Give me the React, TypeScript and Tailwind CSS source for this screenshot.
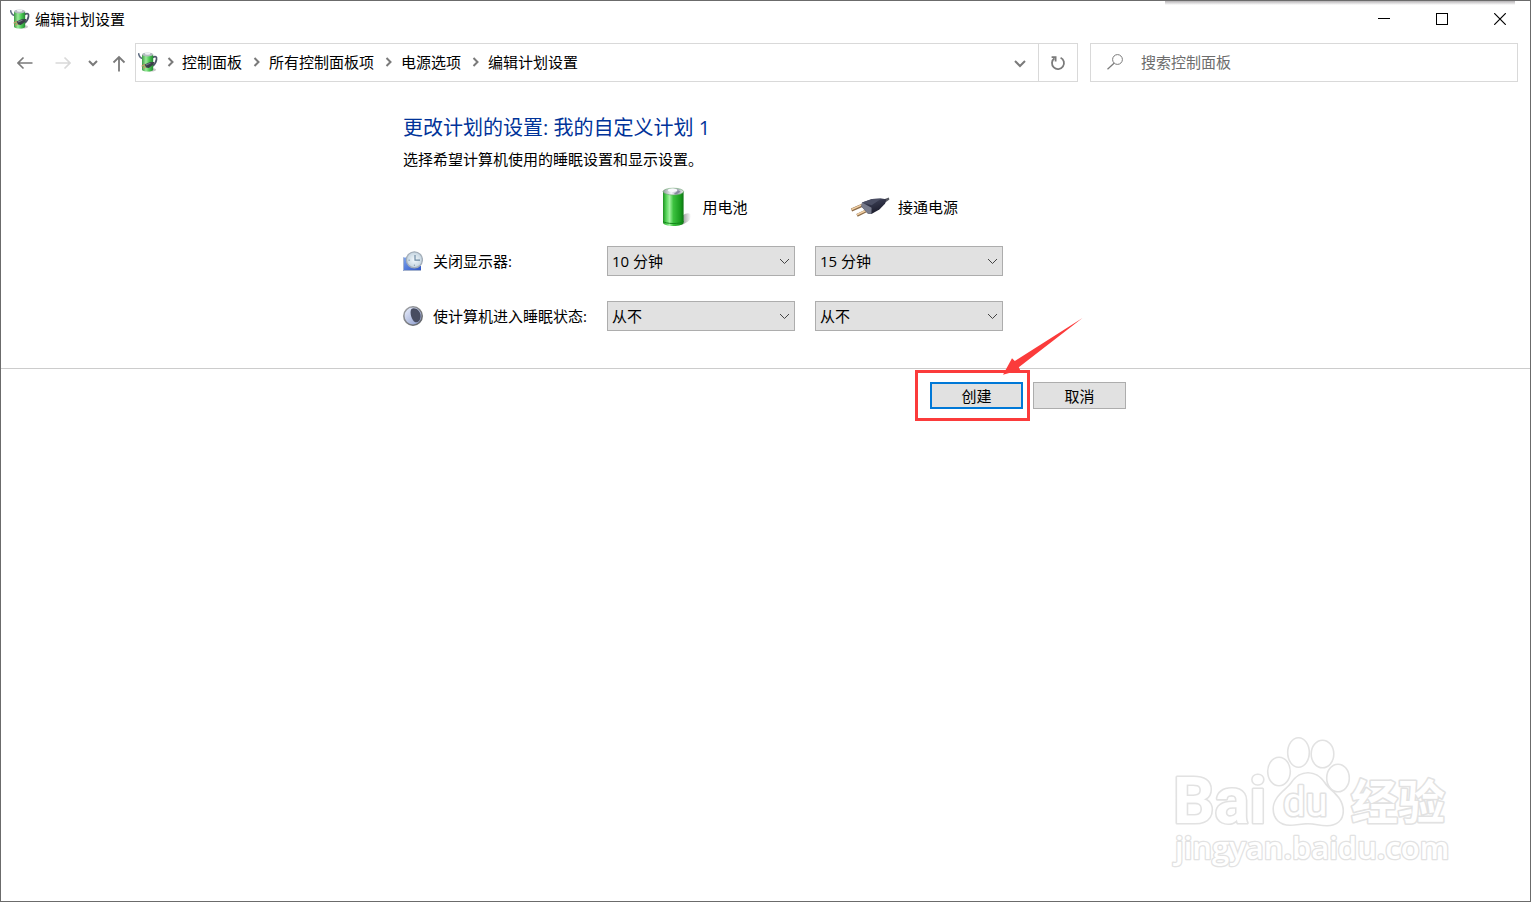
import React, { useState } from 'react';

const BREADCRUMBS = ['控制面板', '所有控制面板项', '电源选项', '编辑计划设置'];

const TIMEOUTS = ['1 分钟', '5 分钟', '10 分钟', '15 分钟', '30 分钟', '从不'];

/** Power options icon: green battery with a cable and plug. */
function PowerPlanIcon() {
  return (
    <svg className="h-5 w-5 shrink-0" viewBox="0 0 20 20" fill="none" aria-hidden="true">
      <defs>
        <linearGradient id="planBody" x1="0" x2="1">
          <stop offset="0" stopColor="#3c9a45" />
          <stop offset="0.35" stopColor="#9bea9a" />
          <stop offset="0.65" stopColor="#4ccb55" />
          <stop offset="1" stopColor="#278a35" />
        </linearGradient>
      </defs>
      <path d="M0.5 1.2C1 4.5 2.2 6 4.6 6.6" stroke="#5d6b80" strokeWidth="1.5" />
      <path d="M14.5 5.5C17.5 3.6 19 4.8 18.5 7.5C18 10.6 17.4 12 14.5 14" stroke="#4d5468" strokeWidth="1.7" />
      <ellipse cx="12.5" cy="17.8" rx="5.5" ry="1.8" fill="#c9c9c9" />
      <path d="M4 2.5V17.4C4 18.8 6.4 19.6 9.6 19.6C12.8 19.6 15.2 18.8 15.2 17.4V2.5Z" fill="url(#planBody)" />
      <ellipse cx="9.6" cy="2.4" rx="5.6" ry="2" fill="#b3bcc0" />
      <ellipse cx="9.6" cy="1.7" rx="2.8" ry="1.1" fill="#eef1f3" />
      <path d="M3.6 14.2L7 12.4M5.2 16.2L8.4 14.4" stroke="#c49a63" strokeWidth="1.3" />
      <path d="M6.6 12.4L11.6 10.2L16.4 10L15.4 12.6L10.8 16L8.2 15.6Z" fill="#3b3e48" />
      <path d="M7.4 12.6L11.8 10.8L13 11.2L8.6 13.6Z" fill="#747986" />
    </svg>
  );
}

function BatteryIcon() {
  return (
    <svg className="h-10 w-10 shrink-0" viewBox="0 0 40 40" fill="none" aria-hidden="true">
      <defs>
        <linearGradient id="cellBody" x1="0" x2="1">
          <stop offset="0" stopColor="#1f8f22" />
          <stop offset="0.14" stopColor="#4fd052" />
          <stop offset="0.32" stopColor="#a2f3a0" />
          <stop offset="0.5" stopColor="#3cc23f" />
          <stop offset="0.85" stopColor="#189a1d" />
          <stop offset="1" stopColor="#0d7413" />
        </linearGradient>
        <linearGradient id="cellCap" x1="0" x2="1">
          <stop offset="0" stopColor="#8f9a9a" />
          <stop offset="0.4" stopColor="#f4f5fa" />
          <stop offset="0.7" stopColor="#a7a9b8" />
          <stop offset="1" stopColor="#e5ebe6" />
        </linearGradient>
        <linearGradient id="cellShade" x1="0" x2="1">
          <stop offset="0" stopColor="#8a8a8a" />
          <stop offset="1" stopColor="#ffffff" />
        </linearGradient>
      </defs>
      <path d="M28 29C33 25 37 26 37 29C37 33 33 36 27 38Z" fill="url(#cellShade)" />
      <path d="M9 4.5V35.5C9 37.6 13.4 39 19.3 39C25.2 39 29.6 37.6 29.6 35.5V4.5Z" fill="url(#cellBody)" />
      <path d="M9 34.4C11 37 27 37.4 29.6 34.4" stroke="#13851a" />
      <ellipse cx="19.3" cy="4.6" rx="10.3" ry="3.4" fill="url(#cellCap)" stroke="#6aa56d" strokeWidth="0.6" />
      <ellipse cx="18.6" cy="3.2" rx="4.6" ry="1.7" fill="#f9f9fd" />
      <path d="M20 6.8L24.5 3.4L26.6 4.8L22 7.6Z" fill="#8888a0" />
    </svg>
  );
}

function PlugIcon() {
  return (
    <svg className="h-10 w-10 shrink-0" viewBox="0 0 40 40" fill="none" aria-hidden="true">
      <defs>
        <linearGradient id="plugBody" x1="0" y1="0" x2="0.5" y2="1">
          <stop offset="0" stopColor="#5d6176" />
          <stop offset="0.45" stopColor="#33364a" />
          <stop offset="1" stopColor="#1b1c2b" />
        </linearGradient>
      </defs>
      <path d="M1.5 23L13 18" stroke="#8b6a47" strokeWidth="3" />
      <path d="M1.5 22.5L13 17.4" stroke="#f0cfa4" strokeWidth="1.5" />
      <path d="M7 28.3L19 22.5" stroke="#8b6a47" strokeWidth="3" />
      <path d="M7 27.7L19 22" stroke="#f0cfa4" strokeWidth="1.5" />
      <path d="M33.5 12.6L38.8 10.4L39.4 12.6L35 15.8Z" fill="#595b63" />
      <path d="M12 15.6L22 12L31.5 11.4L36.4 12.2L35 16.8L29.4 22.6L21.4 27L17.8 26.6L11.4 19.6Z" fill="url(#plugBody)" />
      <path d="M12 15.6L21.6 20.8L21.4 27L17.8 26.6L11.4 19.6Z" fill="#777b8c" />
      <path d="M12 15.6L22 12L31.5 11.4L21.6 18.2Z" fill="#4a4e63" />
    </svg>
  );
}

function DisplayTimeoutIcon() {
  return (
    <svg className="h-5 w-5 shrink-0" viewBox="0 0 20 20" fill="none" aria-hidden="true">
      <defs>
        <linearGradient id="screenFill" x1="0" y1="0" x2="1" y2="1">
          <stop offset="0" stopColor="#7da4ee" />
          <stop offset="1" stopColor="#2c53c4" />
        </linearGradient>
        <radialGradient id="clockFace">
          <stop offset="0" stopColor="#f3f9fd" />
          <stop offset="1" stopColor="#c3d3df" />
        </radialGradient>
      </defs>
      <path d="M0 6.5H6V15H18V20H0Z" fill="url(#screenFill)" />
      <path d="M0.5 6.5V19.5H18" stroke="#a5b3cf" />
      <circle cx="11.4" cy="8.8" r="8" fill="url(#clockFace)" stroke="#a3adb8" strokeWidth="1.3" />
      <path d="M12 4V9.2H17" stroke="#6f8ba3" strokeWidth="1.2" />
      <path d="M5.4 9.2H7M11.4 13.6V15" stroke="#8ba0b3" />
    </svg>
  );
}

function SleepIcon() {
  return (
    <svg className="h-5 w-5 shrink-0" viewBox="0 0 20 20" fill="none" aria-hidden="true">
      <defs>
        <linearGradient id="moonRing" x1="0" y1="0" x2="1" y2="1">
          <stop offset="0" stopColor="#a2a4a8" />
          <stop offset="1" stopColor="#5c5f64" />
        </linearGradient>
        <linearGradient id="moonGlow" x1="0" y1="0" x2="1" y2="1">
          <stop offset="0" stopColor="#f0f4fe" />
          <stop offset="1" stopColor="#8394c9" />
        </linearGradient>
      </defs>
      <circle cx="10" cy="10" r="9.2" fill="url(#moonGlow)" stroke="url(#moonRing)" strokeWidth="1.6" />
      <path d="M8.4 3C12 0.8 17.8 4.6 17.6 10.4C17.4 14.4 14.8 16.8 12.4 16.2C8.6 15 6.2 6 8.4 3Z" fill="#474c60" />
    </svg>
  );
}

function Chevron({ className, d }: { className: string; d: string }) {
  return (
    <svg className={className} viewBox="0 0 12 12" fill="none" stroke="currentColor" aria-hidden="true">
      <path d={d} />
    </svg>
  );
}

function TitleBar() {
  return (
    <header className="flex h-9 items-center pl-[9px] pr-px">
      <PowerPlanIcon />
      <h1 className="ml-[5px] flex-1 text-[15px] leading-5">编辑计划设置</h1>
      <button type="button" aria-label="最小化" className="flex h-9 w-[58px] items-center justify-center">
        <svg className="h-3 w-3" viewBox="0 0 12 12" stroke="#000" shapeRendering="crispEdges">
          <path d="M0 5.5H12" />
        </svg>
      </button>
      <button type="button" aria-label="最大化" className="flex h-9 w-[58px] items-center justify-center">
        <svg className="h-3 w-3" viewBox="0 0 12 12" fill="none" stroke="#000" shapeRendering="crispEdges">
          <path d="M0.5 0.5H11.5V11.5H0.5Z" />
        </svg>
      </button>
      <button type="button" aria-label="关闭" className="flex h-9 w-[58px] items-center justify-center">
        <svg className="h-3 w-3" viewBox="0 0 12 12" stroke="#000" strokeWidth="1.2">
          <path d="M0.2 0.2L11.8 11.8M11.8 0.2L0.2 11.8" />
        </svg>
      </button>
    </header>
  );
}

function NavigationBar() {
  return (
    <div className="flex items-stretch pt-[6px] pr-3 pl-[6px] text-[#7a7a7a]">
      <button type="button" aria-label="后退" className="flex h-[39px] w-9 items-center justify-center">
        <svg className="h-4 w-4" viewBox="0 0 16 16" fill="none" stroke="currentColor" strokeWidth="1.6">
          <path d="M15.5 8H1M6.5 2.5L1 8L6.5 13.5" />
        </svg>
      </button>
      <button type="button" aria-label="前进" className="flex h-[39px] w-10 items-center justify-center text-[#d9d9d9]">
        <svg className="h-4 w-4" viewBox="0 0 16 16" fill="none" stroke="currentColor" strokeWidth="1.6">
          <path d="M0.5 8H15M9.5 2.5L15 8L9.5 13.5" />
        </svg>
      </button>
      <button type="button" aria-label="最近浏览的位置" className="flex h-[39px] w-5 items-center justify-center">
        <Chevron className="h-3 w-3 stroke-2" d="M2 4L6 8L10 4" />
      </button>
      <button type="button" aria-label="上移一级" className="flex h-[39px] w-8 items-center justify-center">
        <svg className="h-[18px] w-4" viewBox="0 0 16 18" fill="none" stroke="currentColor" strokeWidth="1.8">
          <path d="M8 17.5V3M2.5 8.5L8 3L13.5 8.5" />
        </svg>
      </button>

      <div className="flex flex-1 border border-[#d9d9d9]">
        <nav aria-label="地址" className="flex flex-1 items-center pb-[2px] pl-[2px]">
          <PowerPlanIcon />
          <ol className="flex items-center">
            {BREADCRUMBS.map((crumb, index) => (
              <li key={crumb} className="flex items-center">
                <span className={index === 0 ? 'flex w-6 justify-center' : 'flex w-[27px] justify-center'}>
                  <Chevron className="h-3 w-3 stroke-2" d="M4.5 2L8.5 6L4.5 10" />
                </span>
                <a href="#" className="text-[15px] leading-5 whitespace-nowrap text-black">
                  {crumb}
                </a>
              </li>
            ))}
          </ol>
        </nav>
        <button type="button" aria-label="以前的位置" className="flex w-9 items-center justify-center">
          <Chevron className="h-3 w-3 stroke-2" d="M1 4L6 9L11 4" />
        </button>
        <button
          type="button"
          aria-label="刷新"
          className="flex w-[39px] items-center justify-center border-l border-[#d9d9d9]"
        >
          <svg className="h-4 w-4" viewBox="0 0 16 16" fill="none" stroke="currentColor" strokeWidth="1.8">
            <path d="M10.6 2.7A6 6 0 1 1 4.4 3.3" />
            <path d="M1.6 2.2H5.6V6.4" />
          </svg>
        </button>
      </div>

      <label className="ml-3 flex w-[428px] items-center border border-[#d9d9d9] pb-[2px] pl-4">
        <svg className="h-4 w-4 shrink-0" viewBox="0 0 16 16" fill="none" stroke="currentColor">
          <circle cx="10.5" cy="5.5" r="4.9" />
          <path d="M7 9.2L0.5 15.2" strokeWidth="1.2" />
        </svg>
        <input
          type="search"
          aria-label="搜索控制面板"
          placeholder="搜索控制面板"
          className="ml-[18px] min-w-0 flex-1 bg-transparent text-[15px] leading-5 outline-none placeholder:text-[#6d6d6d]"
        />
      </label>
    </div>
  );
}

interface TimeoutSelectProps {
  id: string;
  label?: string;
  initial: string;
}

function TimeoutSelect({ id, label, initial }: TimeoutSelectProps) {
  const [value, setValue] = useState(initial);

  return (
    <div className="relative">
      <select
        id={id}
        aria-label={label}
        value={value}
        onChange={(e) => setValue(e.target.value)}
        className="block h-[30px] w-full appearance-none border border-[#adadad] bg-[#e1e1e1] pr-6 pl-1 text-[15px] leading-5"
      >
        {TIMEOUTS.map((option) => (
          <option key={option}>{option}</option>
        ))}
      </select>
      <Chevron
        className="pointer-events-none absolute top-[9px] right-1 h-3 w-3 text-[#444444]"
        d="M1 4L5.500 8.500L10 4"
      />
    </div>
  );
}

/** Red frame and arrow pointing at the create button. */
function CreateHighlight() {
  return (
    <>
      <span className="pointer-events-none absolute -top-3 -left-[15px] h-[51px] w-[115px] border-3 border-[#fb3b3b]" />
      <svg
        className="pointer-events-none absolute -top-[67px] left-[70px] h-[62px] w-[90px]"
        viewBox="0 0 90 62"
        aria-hidden="true"
      >
        <path d="M82.5 3L14.8 46L12 43.2L3 59.8L20.2 55L18.8 52.2Z" fill="#fb3b3b" />
      </svg>
    </>
  );
}

function Watermark() {
  return (
    <svg
      className="pointer-events-none absolute right-[70px] bottom-[26px] h-[150px] w-[300px]"
      viewBox="0 0 300 150"
      fill="#ffffff"
      stroke="#e2e2e2"
      strokeWidth="3.2"
      strokeLinejoin="round"
      paintOrder="stroke"
    >
      <text x="13" y="98" fontFamily="Roboto" fontWeight="700" fontSize="65">
        Bai
      </text>
      <ellipse cx="119" cy="46.5" rx="10.5" ry="13.5" />
      <ellipse cx="138.5" cy="27.5" rx="10" ry="14" />
      <ellipse cx="162.5" cy="29" rx="10.5" ry="13" />
      <ellipse cx="178" cy="53" rx="10.5" ry="13" />
      <path d="M148 48.5C155 48.5 160 52 164 58C170 67 182.5 72 182.5 86C182.5 95 176 100 167 100C160 100 155 98 148 98C141 98 137 99.5 130 99.5C120 99.5 114 93 114 84C114 72 126 66 132 58C136 52 141 48.5 148 48.5Z" />
      <text x="123" y="91" fontFamily="Roboto" fontSize="40">
        du
      </text>
      <text x="191" y="94" fontFamily="Noto Sans CJK SC" fontWeight="700" fontSize="47">
        经验
      </text>
      <text x="15" y="134" fontFamily="Open Sans" fontWeight="600" fontSize="31" strokeWidth="2.6">
        jingyan.baidu.com
      </text>
    </svg>
  );
}

export default function App() {
  return (
    <div className="relative flex min-h-screen flex-col border border-[#6b6b6b] bg-white font-['Open_Sans','Noto_Sans_CJK_SC',sans-serif] text-black">
      <div className="absolute top-0 right-[15px] h-1 w-[350px] bg-linear-to-b from-[#b5b3b5] to-white" />

      <TitleBar />
      <NavigationBar />

      <main>
        <section className="mx-auto max-w-[725px] pt-8 pb-[37px]">
          <h2 className="text-[20px] leading-7 text-[#003399]">更改计划的设置: 我的自定义计划 1</h2>
          <p className="mt-[7px] text-[15px] leading-5">选择希望计算机使用的睡眠设置和显示设置。</p>

          <div className="mt-[18px] grid grid-cols-[184px_188px_188px] gap-x-5 text-[15px] leading-5">
            <div className="col-start-2 flex items-center justify-center gap-2">
              <BatteryIcon />
              <span>用电池</span>
            </div>
            <div className="flex items-center justify-center gap-2 pr-[10px]">
              <PlugIcon />
              <span>接通电源</span>
            </div>
          </div>

          <div className="mt-[19px] grid grid-cols-[184px_188px_188px] gap-x-5 gap-y-[25px] text-[15px] leading-5">
            <label htmlFor="display-battery" className="flex items-center gap-[10px] whitespace-nowrap">
              <DisplayTimeoutIcon />
              关闭显示器:
            </label>
            <TimeoutSelect id="display-battery" initial="10 分钟" />
            <TimeoutSelect id="display-plugged" label="接通电源时关闭显示器" initial="15 分钟" />

            <label htmlFor="sleep-battery" className="flex items-center gap-[10px] whitespace-nowrap">
              <SleepIcon />
              使计算机进入睡眠状态:
            </label>
            <TimeoutSelect id="sleep-battery" initial="从不" />
            <TimeoutSelect id="sleep-plugged" label="接通电源时使计算机进入睡眠状态" initial="从不" />
          </div>
        </section>

        <div className="border-t border-[#cccccc] pt-[13px]">
          <div className="mx-auto flex max-w-[727px] justify-end gap-[10px] pr-[3px] text-[15px] leading-5">
            <div className="relative">
              <button type="button" className="block h-[27px] w-[93px] border-2 border-[#0078d7] bg-[#e1e1e1]">
                创建
              </button>
              <CreateHighlight />
            </div>
            <button type="button" className="h-[27px] w-[93px] border border-[#adadad] bg-[#e1e1e1]">
              取消
            </button>
          </div>
        </div>
      </main>

      <Watermark />
    </div>
  );
}
